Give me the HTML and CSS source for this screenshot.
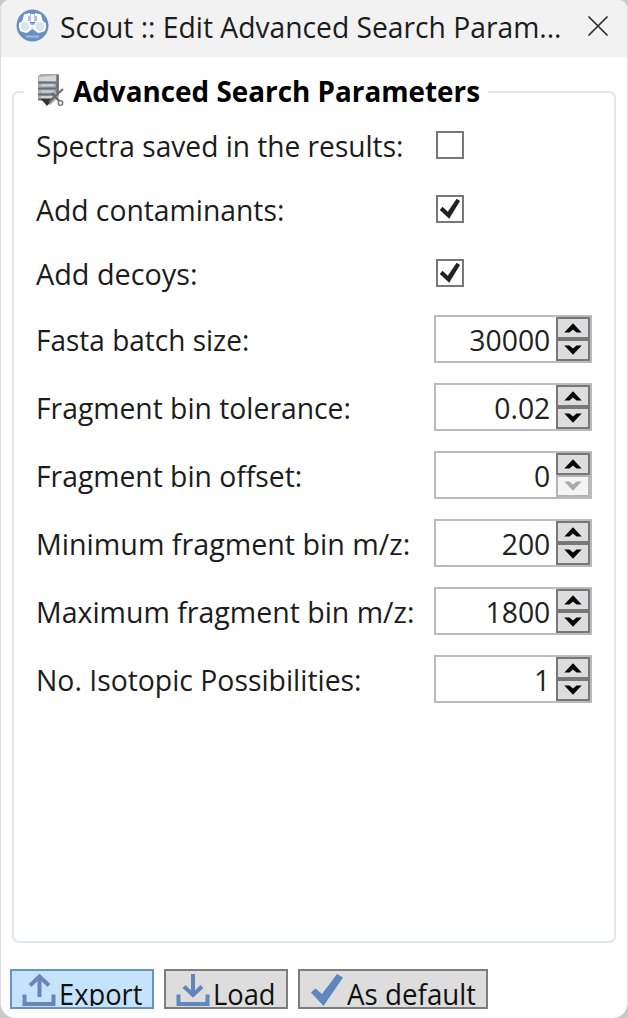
FILE: index.html
```
<!DOCTYPE html>
<html lang="en">
<head>
<meta charset="utf-8">
<title>Scout :: Edit Advanced Search Parameters</title>
<link rel="stylesheet" href="styles.css">
</head>
<body>
<svg class="defs" width="0" height="0">
  <symbol id="up" viewBox="0 0 18 10"><path d="M0.3 9.6 9 0.2 17.7 9.6H12.6L9 6.6 5.4 9.6Z"/></symbol>
  <symbol id="down" viewBox="0 0 18 10"><path d="M0.3 0.4H5.4L9 3.4 12.6 0.4H17.7L9 9.8Z"/></symbol>
  <symbol id="tick" viewBox="0 0 24 24"><path d="M1.8 13 4.6 9.8 9.8 14.8 18.6 1.8 22 4 11.2 21.8Z"/></symbol>
</svg>
<div class="window">
  <header class="titlebar">
    <svg class="app-icon" viewBox="0 0 33 33">
      <circle cx="16.5" cy="16.5" r="16" fill="#6890c3"/>
      <path d="M8 5.5 14 4V13H6ZM25 5.5 19 4V13H27ZM14.5 5H18.5V13H14.5Z" fill="#fff"/>
      <path d="M3 14Q8 10 16.5 15Q25 10 30 14L29 22 22 24 16.5 20 11 24 4 22Z" fill="#edf3f7"/>
      <circle cx="9" cy="17.5" r="5.2" fill="#d7e5ec" stroke="#fff" stroke-width="1.5"/>
      <circle cx="24" cy="17.5" r="5.2" fill="#d7e5ec" stroke="#fff" stroke-width="1.5"/>
      <path d="M13 12V7M20 12V7M14 15H19" stroke="#7199c5" stroke-width="1.2"/>
      <path d="M10 27.5H23" stroke="#a0bad8" stroke-width="2"/>
    </svg>
    <h1 class="title"><span class="fit t-title">Scout :: Edit Advanced Search Param...</span></h1>
    <svg class="close" viewBox="0 0 22 22"><path d="M1.5 1.5 20.5 20.5M20.5 1.5 1.5 20.5"/></svg>
  </header>
  <main class="group">
    <div class="legend">
      <svg class="legend-icon" viewBox="0 0 28 34">
        <path d="M2 3 5 1H23V24L14 32 2 25Z" fill="#a7a9ac"/>
        <path d="M3 4 22 2V9L3 8Z" fill="#d4d6d8"/>
        <path d="M2 9.5H20M2 15.5H20M2 21.5H19M2 26.5H16" stroke="#686e77" stroke-width="2"/>
        <path d="M5 12.3H18M5 18.5H18M5 24H16" stroke="#c8d2dc" stroke-width="2"/>
        <path d="M21.5 2V20" stroke="#6c6d71" stroke-width="2.4"/>
        <path d="M5 26H17L11 33Z" fill="#333"/>
        <path d="M13 29 27 16M16 20 24 29" stroke="#686868" stroke-width="2"/>
        <circle cx="24.5" cy="30" r="2.3" fill="#eee" stroke="#777" stroke-width="1.3"/>
      </svg>
      <h2 class="heading"><span class="fit t-head">Advanced Search Parameters</span></h2>
    </div>
    <div class="row check"><label><span class="fit t1">Spectra saved in the results:</span></label><span class="box"></span></div>
    <div class="row check"><label><span class="fit t2">Add contaminants:</span></label><span class="box"><svg><use href="#tick"/></svg></span></div>
    <div class="row check"><label><span class="fit t3">Add decoys:</span></label><span class="box"><svg><use href="#tick"/></svg></span></div>
    <div class="row"><label><span class="fit t4">Fasta batch size:</span></label><div class="spin"><span class="value">30000</span><div class="arrows"><i><svg><use href="#up"/></svg></i><i><svg><use href="#down"/></svg></i></div></div></div>
    <div class="row"><label><span class="fit t5">Fragment bin tolerance:</span></label><div class="spin"><span class="value">0.02</span><div class="arrows"><i><svg><use href="#up"/></svg></i><i><svg><use href="#down"/></svg></i></div></div></div>
    <div class="row"><label><span class="fit t6">Fragment bin offset:</span></label><div class="spin"><span class="value">0</span><div class="arrows"><i><svg><use href="#up"/></svg></i><i class="off"><svg><use href="#down"/></svg></i></div></div></div>
    <div class="row"><label><span class="fit t7">Minimum fragment bin m/z:</span></label><div class="spin"><span class="value">200</span><div class="arrows"><i><svg><use href="#up"/></svg></i><i><svg><use href="#down"/></svg></i></div></div></div>
    <div class="row"><label><span class="fit t8">Maximum fragment bin m/z:</span></label><div class="spin"><span class="value">1800</span><div class="arrows"><i><svg><use href="#up"/></svg></i><i><svg><use href="#down"/></svg></i></div></div></div>
    <div class="row"><label><span class="fit t9">No. Isotopic Possibilities:</span></label><div class="spin"><span class="value">1</span><div class="arrows"><i><svg><use href="#up"/></svg></i><i><svg><use href="#down"/></svg></i></div></div></div>
  </main>
  <footer class="actions">
    <button class="btn export"><svg class="tray" viewBox="0 0 34 34"><path d="M2.5 21.5V31H31.5V21.5" stroke-width="4"/><path d="M17.5 24V4M8 12.5 17.5 3.5 27 12.5" stroke-width="4"/></svg><span class="fit b1">Export</span></button>
    <button class="btn load"><svg class="tray" viewBox="0 0 34 34"><path d="M2.5 21.5V31H31.5V21.5" stroke-width="4"/><path d="M17 1V22M8 13.5 17 22 26 13.5" stroke-width="4"/></svg><span class="fit b2">Load</span></button>
    <button class="btn default"><svg class="mark" viewBox="0 0 34 34"><path d="M1 19.5 5.5 15.5 12 21 27 1 33 4.5 13.5 33Z"/></svg><span class="fit b3">As default</span></button>
  </footer>
</div>
</body>
</html>
```
FILE: styles.css
```
* { box-sizing: border-box; }
body {
  margin: 0;
  width: 628px;
  height: 1018px;
  overflow: hidden;
  background: #c9c9c9;
  font: 30px/40px "Open Sans", "Noto Sans", sans-serif;
  color: #1c1c1c;
}
.defs { display: none; }
.window {
  width: 628px;
  height: 1018px;
  display: flex;
  flex-direction: column;
  background: #fff;
  border: 1px solid #dcdcdc;
  border-width: 0 1px;
  border-radius: 9px 9px 15px 15px;
  overflow: hidden;
}
.titlebar {
  height: 57px;
  flex: none;
  display: flex;
  align-items: center;
  padding: 0 18px 6px 15px;
  background: #f2f2f2;
}
.app-icon { width: 33px; height: 33px; flex: none; }
.title { flex: 1; min-width: 0; margin: 0 0 0 11px; font-size: 30px; font-weight: 400; padding-top: 2px; }
.close { width: 22px; height: 22px; flex: none; fill: none; stroke: #2b2b2b; stroke-width: 1.7; }
.fit { display: inline-block; white-space: nowrap; transform-origin: 0 50%; }
.t-title { transform: scaleX(.941); }
.t-head { transform: scaleX(.96); }
.t1 { transform: scaleX(.937); }
.t2 { transform: scaleX(.943); }
.t3 { transform: scaleX(.96); }
.t4 { transform: scaleX(.933); }
.t5 { transform: scaleX(.943); }
.t6 { transform: scaleX(.943); }
.t7 { transform: scaleX(.955); }
.t8 { transform: scaleX(.95); }
.t9 { transform: scaleX(.945); }
.b1 { transform: scaleX(.91); }
.b2 { transform: scaleX(.91); }
.b3 { transform: scaleX(.925); }
.group {
  height: 852px;
  flex: none;
  margin: 34px 11px 0;
  padding: 0 22px;
  border: 2px solid #dfe6ec;
  border-radius: 7px;
}
.legend {
  width: 464px;
  height: 40px;
  display: flex;
  align-items: center;
  margin: -21px 0 1px -12px;
  padding-left: 12px;
  background: #fff;
}
.legend-icon { width: 28px; height: 34px; flex: none; margin-top: -5px; }
.heading { margin: -3px 0 0 9px; font-size: 29px; font-weight: 700; color: #000; line-height: 40px; }
.row { height: 68px; display: flex; align-items: center; }
.row.check { height: 64px; }
.row label { width: 398px; flex: none; padding-top: 2px; }
.box {
  width: 28px;
  height: 28px;
  margin-left: 2px;
  border: 2px solid #777;
  display: flex;
}
.box svg { width: 24px; height: 24px; fill: #222; }
.spin {
  width: 158px;
  height: 48px;
  display: flex;
  border: 2px solid #b9bac0;
}
.value {
  flex: 1;
  text-align: right;
  padding-right: 6px;
  line-height: 45px;
  transform: scaleX(.945);
  transform-origin: 100% 50%;
  color: #222;
}
.arrows { width: 34px; display: flex; flex-direction: column; }
.arrows i {
  flex: 1;
  display: flex;
  align-items: center;
  justify-content: center;
  border: 2px solid #777;
  background: #ddd;
}
.arrows svg { width: 18px; height: 10px; fill: #050505; }
.arrows i.off { border-color: #b5b5b5; background: #f4f4f4; }
.arrows i.off svg { fill: #aaa; }
.actions { display: flex; gap: 10px; padding: 26px 9px 0; }
.btn {
  height: 40px;
  padding: 0;
  display: flex;
  align-items: flex-start;
  border: 2px solid #7d7d7d;
  background: #ddd;
  font: inherit;
  color: #111;
}
.btn .fit { height: 35px; line-height: 46px; overflow: hidden; text-align: left; }
.btn svg { width: 34px; height: 34px; flex: none; margin: 2px 3px 0 10px; }
.export { width: 144px; background: #c5e4fb; border-color: #6794c0; }
.load { width: 124px; }
.default { width: 190px; }
.tray { fill: none; stroke: #5f86bd; }
.export .tray { stroke: #6985b9; }
.mark { fill: #5f86bd; }
```
